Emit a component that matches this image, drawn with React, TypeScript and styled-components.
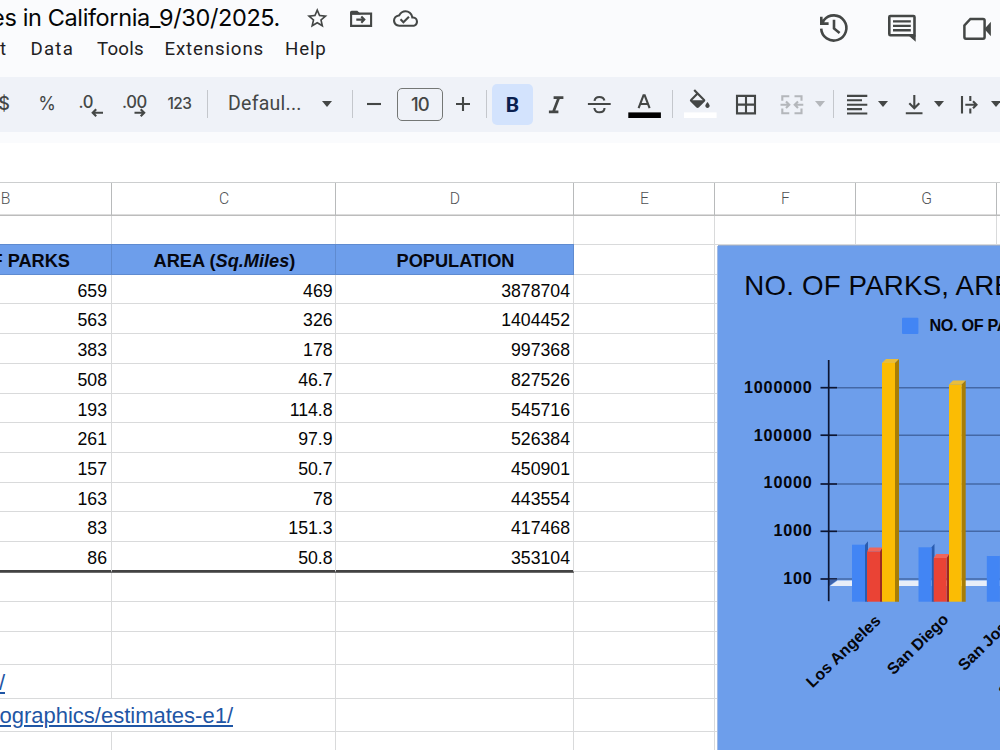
import React from "react";
import styled, { createGlobalStyle, css } from "styled-components";
import { MdStarBorder, MdOutlineCloudDone } from "react-icons/md";

const GlobalStyle = createGlobalStyle`
  * { box-sizing: border-box; }
  html, body { margin: 0; padding: 0; background: #fff; }
  body { width: 1000px; height: 750px; overflow: hidden; }
`;

const sheetFont = `"Liberation Sans", Arial, sans-serif`;
const uiFont = `Roboto, "Liberation Sans", sans-serif`;
const brandFont = `Inter, Roboto, sans-serif`;

const Page = styled.div`
  width: 1000px;
  height: 750px;
  overflow: hidden;
  display: flex;
  flex-direction: column;
  background: #fff;
  font-family: ${uiFont};
`;

const Header = styled.header`
  height: 77px;
  flex: none;
  display: flex;
  justify-content: space-between;
  background: #fafbfd;
  color: #444746;
`;

const HeaderMain = styled.div`
  display: flex;
  flex-direction: column;
`;

const TitleRow = styled.div`
  display: flex;
  align-items: center;
  height: 37px;
`;

const Title = styled.div`
  width: 280px;
  display: flex;
  justify-content: flex-end;
  overflow: hidden;
  white-space: nowrap;
  font: 400 23.5px/34px ${brandFont};
  letter-spacing: -0.38px;
  padding-bottom: 2px;
  color: #050606;
`;

const TitleIcons = styled.div`
  display: flex;
  align-items: center;
  gap: 19.5px;
  padding-left: 25px;
`;

const MenuBar = styled.nav`
  display: flex;
  height: 26px;
`;

const MenuItem = styled.span<{ $w: number; $ls?: number }>`
  width: ${(p) => p.$w}px;
  font: 400 18.7px/25px ${uiFont};
  letter-spacing: ${(p) => p.$ls ?? 0.85}px;
  color: #1f2123;
  white-space: nowrap;
`;

const HeaderActions = styled.div`
  display: flex;
  align-items: center;
  height: 56px;
`;

const Toolbar = styled.div`
  height: 55px;
  padding-bottom: 1px;
  flex: none;
  display: flex;
  align-items: center;
  background: #eff2f8;
  color: #444746;
  overflow: hidden;
`;

const Slot = styled.div<{ $w: number; $ml?: number }>`
  flex: none;
  width: ${(p) => p.$w}px;
  height: 54px;
  margin-left: ${(p) => p.$ml ?? 0}px;
  display: flex;
  align-items: center;
  justify-content: center;
`;

const Glyph = styled.span<{ $size: number; $weight?: number; $ls?: number }>`
  font: ${(p) => p.$weight ?? 400} ${(p) => p.$size}px/24px ${brandFont};
  letter-spacing: ${(p) => p.$ls ?? 0}px;
`;

const FontName = styled.div`
  flex: none;
  width: 100px;
  padding-left: 14px;
  font: 400 19.5px/24px ${uiFont};
  letter-spacing: 0.25px;
`;

const Divider = styled.i`
  width: 1px;
  height: 28px;
  background: #c4c7cc;
`;

const SizeBox = styled.div`
  flex: none;
  width: 46px;
  height: 33px;
  margin-left: 15px;
  border: 1px solid #747775;
  border-radius: 5px;
  display: flex;
  align-items: center;
  justify-content: center;
`;

const BoldButton = styled.div`
  flex: none;
  width: 41px;
  height: 41px;
  margin-left: 1px;
  border-radius: 5px;
  background: #d3e3fd;
  color: #0a1f4f;
  display: flex;
  align-items: center;
  justify-content: center;
  padding-top: 2px;
  font: 700 21px/24px ${uiFont};
`;

const Caret = styled.i<{ $muted?: boolean }>`
  border: 5.5px solid transparent;
  border-bottom: 0;
  border-top: 6px solid ${(p) => (p.$muted ? "#b4b7bb" : "#444746")};
`;

const Icon = styled.svg<{ $muted?: boolean; $stroke?: number }>`
  flex: none;
  display: block;
  overflow: visible;
  fill: none;
  stroke: ${(p) => (p.$muted ? "#b4b7bb" : "#444746")};
  stroke-width: ${(p) => p.$stroke ?? 2.1};
`;

const FormulaStrip = styled.div`
  height: 51px;
  flex: none;
  background: linear-gradient(#fafbfd 0 11px, #fff 11px);
  border-bottom: 1px solid #cccecf;
`;

const Sheet = styled.main`
  position: relative;
  flex: 1;
  overflow: hidden;
  font-family: ${sheetFont};
`;

const Row = styled.div<{ $h: number }>`
  display: flex;
  width: 1138px;
  margin-left: -101px;
  height: ${(p) => p.$h}px;
`;

const HeadCell = styled.div<{ $w: number }>`
  flex: none;
  width: ${(p) => p.$w}px;
  border-right: 1px solid #b8babb;
  border-bottom: 1px solid #bcbcbc;
  box-shadow: inset 0 -1px #dcdcdc;
  padding: 0 0 1px 1px;
  display: flex;
  align-items: center;
  justify-content: center;
  font: 300 15.7px/20px ${uiFont};
  color: #4d5053;
`;

type CellKind = "plain" | "title" | "last";

const Cell = styled.div<{ $w: number; $kind?: CellKind; $pad?: number }>`
  flex: none;
  width: ${(p) => p.$w}px;
  border-right: 1px solid #d9dadb;
  border-bottom: 1px solid #d9dadb;
  padding: 3px ${(p) => p.$pad ?? 3}px 0 0;
  display: flex;
  align-items: center;
  justify-content: flex-end;
  font-size: 17.7px;
  line-height: 20px;
  color: #050505;
  white-space: pre;
  ${(p) =>
    p.$kind === "title" &&
    css`
      justify-content: center;
      padding-right: 0;
      padding-left: ${p.$pad ?? 0}px;
      background: #6d9eeb;
      border-color: #5f8bd0;
      box-shadow: 0 -1px #5f8bd0;
      font-size: 18.2px;
      font-weight: 700;
      color: #06070f;
    `}
  ${(p) =>
    p.$kind === "last" &&
    css`
      padding-top: 2px;
      border-bottom-color: #434343;
      box-shadow: inset 0 -1px #434343, 0 1px #6c6c6c;
      position: relative;
    `}
`;

const LinkCell = styled.div<{ $w: number; $right: number }>`
  flex: none;
  width: ${(p) => p.$w}px;
  padding: 2px ${(p) => p.$right}px 0 0;
  border-bottom: 1px solid #d9dadb;
  border-right: 1px solid #d9dadb;
  display: flex;
  align-items: center;
  justify-content: flex-end;
  overflow: hidden;
`;

const Link = styled.a`
  font: 400 22px/26px ${sheetFont};
  color: #1f56a5;
  text-decoration: underline;
  text-decoration-thickness: 1.6px;
  text-underline-offset: 2px;
  white-space: nowrap;
`;

const ChartFrame = styled.section`
  position: absolute;
  left: 718px;
  top: 63px;
  width: 282px;
  height: 504px;
  background: #6d9eeb;
  box-shadow: -1px 0 #a3bce6, 0 -1px #93abd2;
`;

const Plot = styled.svg`
  display: block;
  font-family: ${sheetFont};
  fill: #05060c;
`;

const widths = [213, 224, 238, 141, 141, 141, 40];
const pads = [4, 2.4, 3];
const letters = ["B", "C", "D", "E", "F", "G", ""];
const data: [string, string, string][] = [
  ["659", "469", "3878704"],
  ["563", "326", "1404452"],
  ["383", "178", "997368"],
  ["508", "46.7", "827526"],
  ["193", "114.8", "545716"],
  ["261", "97.9", "526384"],
  ["157", "50.7", "450901"],
  ["163", "78", "443554"],
  ["83", "151.3", "417468"],
  ["86", "50.8", "353104"],
];
const dataHeights = [29, 30, 30, 30, 29, 30, 30, 29, 30, 30];

const Blanks = ({ from = 0 }: { from?: number }) => (
  <>
    {widths.slice(from).map((w, i) => (
      <Cell key={i} $w={w} />
    ))}
  </>
);

const gridLevels = [
  { y: 387.7, label: "1000000", base: 393 },
  { y: 435.2, label: "100000", base: 440.5 },
  { y: 484, label: "10000", base: 488 },
  { y: 531.3, label: "1000", base: 536.3 },
  { y: 579, label: "100", base: 583.8 },
];

type BarProps = { x: number; w: number; d: number; top: number; rise: number; face: string; side: string; lid: string };

const Bar = ({ x, w, d, top, rise, face, side, lid }: BarProps) => (
  <g>
    <path d={`M${x} ${top}l${d} ${-rise}h${w}l${-d} ${rise}z`} fill={lid} />
    <path d={`M${x + w} ${top}l${d} ${-rise}V601.7h${-d}z`} fill={side} />
    <rect x={x} y={top} width={w} height={601.7 - top} fill={face} />
  </g>
);

const blue = { face: "#4285f4", side: "#2a5cb0", lid: "#6d9eeb" };
const red = { face: "#ea4335", side: "#9c2a20", lid: "#f0665b" };
const gold = { face: "#fbbc04", side: "#a77d06", lid: "#e9bd3c" };

const Chart = () => (
  <ChartFrame>
    <Plot width="282" height="504" viewBox="718 246 282 504">
      <text x="744.3" y="294.8" fontSize="27.7" letterSpacing="0.18">
        NO. OF PARKS, AREA (Sq.Miles) and POPULATION
      </text>
      <rect x="902" y="317.7" width="16.4" height="16.4" rx="1" fill="#4285f4" />
      <text x="929.4" y="331" fontSize="16.2" fontWeight="700" letterSpacing="-0.3">
        NO. OF PARKS
      </text>
      {gridLevels.map((g) => (
        <g key={g.label}>
          <path d={`M837 ${g.y}H1000`} stroke="#4468a6" strokeWidth="1.4" />
          <path d={`M820.5 ${g.y}H837`} stroke="#0d1530" strokeWidth="1.7" />
          <text x="812.6" y={g.base} fontSize="16.2" fontWeight="700" letterSpacing="0.8" textAnchor="end">
            {g.label}
          </text>
        </g>
      ))}
      <path d="M829 586V579.5H838z" fill="#3d62a8" />
      <path d="M830 586L837.5 580.4H1000V586z" fill="#e8eef8" />
      <path d="M828.7 360V601.2" stroke="#0d1530" strokeWidth="1.7" />
      <Bar x={852} w={13} d={3} top={544.7} rise={3.5} {...blue} />
      <Bar x={867} w={13} d={2.6} top={551.5} rise={4} {...red} />
      <Bar x={882} w={13} d={4} top={363} rise={4} {...gold} />
      <Bar x={918.5} w={13} d={3} top={547.3} rise={3.5} {...blue} />
      <Bar x={933.7} w={13} d={2.6} top={558} rise={4} {...red} />
      <Bar x={949} w={12.7} d={4} top={384.5} rise={4} {...gold} />
      <Bar x={986.8} w={13} d={3} top={556} rise={3.5} {...blue} />
      <g fontSize="16" fontWeight="700">
        <text transform="translate(812.5 688.6) rotate(-44)" textLength="96">Los Angeles</text>
        <text transform="translate(893.5 675.5) rotate(-44.5)" textLength="78.5">San Diego</text>
        <text transform="translate(964.5 671.5) rotate(-44.5)">San Jose</text>
        <text transform="translate(1005 697.5) rotate(-44.5)">S</text>
      </g>
    </Plot>
  </ChartFrame>
);

export default function App() {
  return (
    <Page>
      <GlobalStyle />
      <Header>
        <HeaderMain>
          <TitleRow>
            <Title>es in California_9/30/2025.</Title>
            <TitleIcons>
              <MdStarBorder size={24.5} />
              <Icon width="24" height="20" viewBox="349.5 8.7 24 20">
                <path d="M351.6 13.3H371.6V25.6H351.6zM356.8 19.3H364.5M361.8 16.2L364.8 19.3L361.8 22.4" />
                <path d="M350.5 14V12Q350.5 10.4 352.2 10.4H357.8L361 13.4V14.3H350.5z" fill="#444746" stroke="none" />
              </Icon>
              <MdOutlineCloudDone size={25} />
            </TitleIcons>
          </TitleRow>
          <MenuBar>
            <MenuItem $w={30.5}>t</MenuItem>
            <MenuItem $w={66.5} $ls={1.2}>Data</MenuItem>
            <MenuItem $w={67.5} $ls={0.2}>Tools</MenuItem>
            <MenuItem $w={120.5} $ls={0.85}>Extensions</MenuItem>
            <MenuItem $w={50}>Help</MenuItem>
          </MenuBar>
        </HeaderMain>
        <HeaderActions>
          <Icon $stroke={2.6} width="32" height="32" viewBox="818 12 32 32">
            <path d="M821.2 28.6A12.6 12.6 0 1 0 824 20L822 23.4M821.3 16.8V23.6H828.6M834 19.8V28.4L839.6 33" />
          </Icon>
          <Icon $stroke={2.6} width="107" height="32" viewBox="850 12 107 32">
            <path d="M890.4 16H913.4Q914.5 16 914.5 17.1V35.2H890.4Q889.3 35.2 889.3 34V17.1Q889.3 16 890.4 16z" />
            <path d="M908.5 35.4H915.7V41.8z" fill="#444746" stroke="none" />
            <path d="M893 21.4H910.8M893 25.9H910.8M893 30.3H910.8" strokeWidth="2.4" />
          </Icon>
          <Icon $stroke={2.5} width="43" height="32" viewBox="957 12 43 32">
            <path d="M970.4 19H983Q984.6 19 984.6 20.6V37Q984.6 38.7 983 38.7H966Q964.4 38.7 964.4 37V25.4z" />
            <path d="M984.4 29L990.9 21.8V36.2z" fill="#444746" stroke="none" />
          </Icon>
        </HeaderActions>
      </Header>

      <Toolbar>
        <Slot $w={40} $ml={-16}><Glyph $size={18} $weight={500}>$</Glyph></Slot>
        <Slot $w={46}><Glyph $size={18}>%</Glyph></Slot>
        <Slot $w={41}>
          <Icon width="24" height="28" viewBox="78 90 24 28">
            <text x="77.6" y="107.8" fontFamily="Inter" fontSize="16.6" fontWeight="500" letterSpacing="-0.4" fill="#444746" stroke="none">.0</text>
            <path d="M102 112.8H92M95.2 109.3L91.7 112.8L95.2 116.3" />
          </Icon>
        </Slot>
        <Slot $w={47}>
          <Icon width="24" height="28" viewBox="122.5 90 24 28">
            <text x="121.6" y="107.8" fontFamily="Inter" fontSize="16.6" fontWeight="500" letterSpacing="-0.4" fill="#444746" stroke="none">.00</text>
            <path d="M134 112.8H143.5M140.2 109.3L143.7 112.8L140.2 116.3" />
          </Icon>
        </Slot>
        <Slot $w={43}><Glyph $size={15.4} $weight={500} $ls={-0.5}>123</Glyph></Slot>
        <Slot $w={13}><Divider /></Slot>
        <FontName>Defaul...</FontName>
        <Slot $w={25}><Caret /></Slot>
        <Slot $w={27}><Divider /></Slot>
        <Slot $w={16}>
          <Icon width="14" height="14" viewBox="0 0 14 14"><path d="M0 7H14" /></Icon>
        </Slot>
        <SizeBox><Glyph $size={18.5} $weight={500} $ls={-0.8}>10</Glyph></SizeBox>
        <Slot $w={39}>
          <Icon width="14" height="14" viewBox="0 0 14 14"><path d="M0 7H14M7 0V14" /></Icon>
        </Slot>
        <Slot $w={9}><Divider /></Slot>
        <BoldButton>B</BoldButton>
        <Slot $w={46}>
          <Icon width="16" height="22" viewBox="548 94 16 22">
            <path d="M553.6 98.6H563.4M548.9 112.9H558.4M558.9 98.6L553.3 112.9" strokeWidth="2.7" />
          </Icon>
        </Slot>
        <Slot $w={40}>
          <Icon width="24" height="22" viewBox="587.5 94 24 22">
            <path d="M588.4 105H611.2M595 101.8C595.4 98.9 597.7 98 599.8 98S604.3 98.8 604.9 101.5M594.9 109C595.2 112 597.3 113.3 600 113.3S605 112 605 109" />
          </Icon>
        </Slot>
        <Slot $w={50}>
          <Icon width="33" height="30" viewBox="628 89 33 30">
            <path d="M638.6 108.2L643.5 95.4H644.7L649.6 108.2M640.4 104H647.9" />
            <rect x="628.3" y="112.4" width="32.6" height="5.6" fill="#000" stroke="none" />
          </Icon>
        </Slot>
        <Slot $w={7}><Divider /></Slot>
        <Slot $w={49}>
          <Icon width="33" height="30" viewBox="684 89 33 30">
            <g transform="translate(686.6 89.3) scale(1.1)">
              <path
                fill="#444746"
                stroke="none"
                d="M16.56 8.94L7.62 0 6.21 1.41l2.38 2.38-5.15 5.15a1.49 1.49 0 0 0 0 2.12l5.5 5.5c.29.29.68.44 1.06.44s.77-.15 1.06-.44l5.5-5.5c.59-.58.59-1.53 0-2.12zM5.21 10L10 5.21 14.79 10H5.21zM19 11.5s-2 2.17-2 3.5c0 1.1.9 2 2 2s2-.9 2-2c0-1.33-2-3.5-2-3.5z"
              />
            </g>
            <rect x="684" y="112.4" width="32.6" height="5.6" fill="#fff" stroke="none" />
          </Icon>
        </Slot>
        <Slot $w={42}>
          <Icon width="22" height="22" viewBox="735 94 22 22">
            <path d="M737 96.9H755V114.4H737zM746 96.9V114.4M737 105.6H755" />
          </Icon>
        </Slot>
        <Slot $w={37} $ml={6}>
          <Icon $muted width="24" height="22" viewBox="780 94 24 22">
            <path d="M789.3 97.2H782.3V101.8M789.3 114.2H782.3V109.6M794.5 97.2H801.5V101.8M794.5 114.2H801.5V109.6M780.5 105.7H789M786 102.4L789.3 105.7L786 109M803.3 105.7H795M798 102.4L794.7 105.7L798 109" />
          </Icon>
        </Slot>
        <Slot $w={19}><Caret $muted /></Slot>
        <Slot $w={9}><Divider /></Slot>
        <Slot $w={38}>
          <Icon width="20" height="22" viewBox="847 94 20 22">
            <path d="M847 96.9H867.3M847 101.3H862M847 105.7H867.3M847 110.1H862M847 114.5H867.3" />
          </Icon>
        </Slot>
        <Slot $w={13}><Caret /></Slot>
        <Slot $w={35} $ml={7}>
          <Icon width="18" height="22" viewBox="904.5 94 18 22">
            <path d="M905.3 114.3H922M913.8 96V109M908.8 104.3L913.8 109.3L918.8 104.3" />
          </Icon>
        </Slot>
        <Slot $w={15}><Caret /></Slot>
        <Slot $w={37} $ml={5}>
          <Icon width="18" height="22" viewBox="961 94 18 22">
            <path d="M962 97V114.6M970.3 97V102M970.3 109.5V114.6M965.3 105.7H976M973 102.2L976.5 105.7L973 109.2" />
          </Icon>
        </Slot>
        <Slot $w={15}><Caret /></Slot>
      </Toolbar>

      <FormulaStrip />

      <Sheet>
        <Row $h={33}>
          {widths.map((w, i) => (
            <HeadCell key={i} $w={w}>{letters[i]}</HeadCell>
          ))}
        </Row>
        <Row $h={29}><Blanks /></Row>
        <Row $h={30}>
          <Cell $w={213} $kind="title">NO. OF PARKS</Cell>
          <Cell $w={224} $kind="title" $pad={2}>AREA (<em>Sq.Miles</em>)</Cell>
          <Cell $w={238} $kind="title" $pad={2}>POPULATION</Cell>
          <Blanks from={3} />
        </Row>
        {data.map((row, r) => (
          <Row key={r} $h={dataHeights[r]}>
            {row.map((v, c) => (
              <Cell key={c} $w={widths[c]} $pad={pads[c]} $kind={r === data.length - 1 ? "last" : "plain"}>{v}</Cell>
            ))}
            <Blanks from={3} />
          </Row>
        ))}
        <Row $h={30}><Blanks /></Row>
        <Row $h={30}><Blanks /></Row>
        <Row $h={33}><Blanks /></Row>
        <Row $h={34}>
          <LinkCell $w={213} $right={106}><Link>/</Link></LinkCell>
          <Blanks from={1} />
        </Row>
        <Row $h={33}>
          <LinkCell $w={437} $right={102}><Link>ographics/estimates-e1/</Link></LinkCell>
          <Blanks from={2} />
        </Row>
        <Row $h={33}><Blanks /></Row>
        <Chart />
      </Sheet>
    </Page>
  );
}
